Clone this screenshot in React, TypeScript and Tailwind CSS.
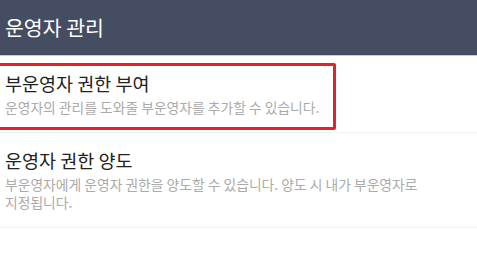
import React from "react";

export default function App() {
  return (
    <div
      className="relative w-[477px] h-[253px] bg-white overflow-hidden"
      style={{ fontFamily: '"Noto Sans CJK KR", "Noto Sans", sans-serif' }}
    >
      <div className="h-[56px] bg-[#454d63] border-b border-[#c9ccd3] flex items-center pl-[5px] relative">
        <span className="text-white text-[20.5px] leading-none">운영자 관리</span>
      </div>
      <div className="px-[5px] pt-[15px] pb-[16px] border-b border-[#f0f0f0]">
        <div className="text-[18.5px] text-[#222] leading-[24px]">부운영자 권한 부여</div>
        <div className="text-[13.8px] text-[#aaaaaa] leading-[18px] mt-[3px]">
          운영자의 관리를 도와줄 부운영자를 추가할 수 있습니다.
        </div>
      </div>
      <div className="px-[5px] pt-[15px] pb-[16px] border-b border-[#f0f0f0]">
        <div className="text-[18.5px] text-[#222] leading-[24px]">운영자 권한 양도</div>
        <div className="text-[13.8px] text-[#aaaaaa] leading-[18px] mt-[3px] w-[440px] break-keep">
          부운영자에게 운영자 권한을 양도할 수 있습니다. 양도 시 내가 부운영자로 지정됩니다.
        </div>
      </div>
      <div className="absolute left-[-4px] top-[63px] w-[340px] h-[67px] border-[3px] border-[#e3202b] rounded-[2px]" />
    </div>
  );
}
